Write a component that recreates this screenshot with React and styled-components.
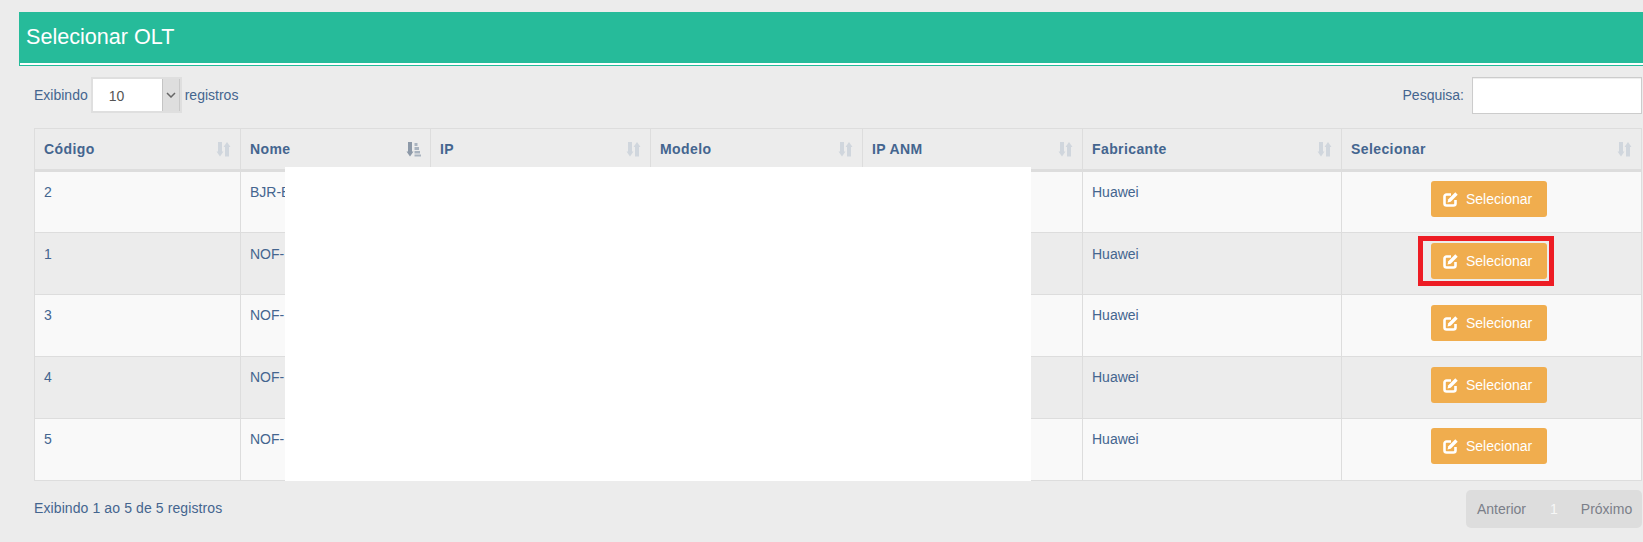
import React from "react";
import styled, { createGlobalStyle } from "styled-components";

const Global = createGlobalStyle`
  html, body { margin: 0; padding: 0; background: #ececec; overflow: hidden; }
  body { font-family: "Liberation Sans", Arial, sans-serif; font-size: 14px; color: #44658f; }
`;

const Page = styled.div`
  position: relative;
  width: 1643px;
  height: 542px;
  padding-top: 12px;
  box-sizing: border-box;
`;

const TitleBar = styled.header`
  margin-left: 19px;
  height: 54px;
  box-sizing: border-box;
  background: #26bb9a;
  border-left: 1px solid #26bb9a;
  border-bottom: 1px solid #26bb9a;
  position: relative;
  padding: 12px 0 0 6px;
  &::after {
    content: "";
    display: block;
    position: absolute;
    left: 0; right: 0; bottom: 0;
    height: 2px;
    background: #fff;
  }
`;

const Title = styled.h1`
  margin: 0;
  font-size: 21.6px;
  font-weight: 400;
  line-height: 25px;
  color: #fff;
`;

const Content = styled.main`
  padding: 11px 1px 0 34px;
`;

const Controls = styled.div`
  display: flex;
  justify-content: space-between;
  align-items: flex-start;
  height: 51px;
`;

const Label = styled.label`
  display: flex;
  align-items: flex-start;
  gap: ${p => p.$gap}px;
  height: 37px;
  line-height: 36px;
`;

const SelectBox = styled.div`
  display: flex;
  width: 91px;
  height: 36px;
  box-sizing: border-box;
  border: 2px solid #dfdfdf;
  background: #fff;
`;

const SelectValue = styled.span`
  flex: 1;
  padding-left: 16px;
  line-height: 34px;
  font-size: 14px;
  color: #555;
`;

const SelectArrow = styled.span`
  display: flex;
  align-items: center;
  justify-content: center;
  width: 16px;
  background: #dedede;
  border-left: 1px solid #c4c4c4;
  border-right: 1px solid #c9c9c9;
`;

const SearchInput = styled.div`
  width: 170px;
  height: 37px;
  box-sizing: border-box;
  border: 1px solid #ccc;
  background: #fff;
  box-shadow: inset 0 1px 1px rgba(0,0,0,.075);
`;

const Table = styled.table`
  width: 1608px;
  table-layout: fixed;
  border-collapse: separate;
  border-spacing: 0;
  border-top: 1px solid #ddd;
  border-left: 1px solid #ddd;
`;

const Th = styled.th`
  position: relative;
  height: 43px;
  padding: 0 10px 0 9px;
  box-sizing: border-box;
  background: #ececec;
  border-right: 1px solid #ddd;
  border-bottom: 3px solid #ddd;
  text-align: left;
  font-size: 14px;
  font-weight: 700;
  letter-spacing: 0.4px;
  color: #44658f;
`;

const SortSlot = styled.span`
  position: absolute;
  right: 9px;
  top: 13px;
  display: block;
  line-height: 0;
`;

const Row = styled.tr`
  height: ${p => p.$h}px;
  background: ${p => (p.$odd ? "#f9f9f9" : "#ececec")};
`;

const Td = styled.td`
  padding: ${p => p.$top}px 10px 0 9px;
  box-sizing: border-box;
  border-right: 1px solid #ddd;
  border-bottom: 1px solid #ddd;
  vertical-align: top;
  line-height: 17px;
  overflow: hidden;
  white-space: nowrap;
`;

const ActionTd = styled(Td)`
  padding: ${p => p.$top}px 15px 0 10px;
`;

const Button = styled.button`
  display: flex;
  align-items: center;
  justify-content: flex-start;
  gap: 8px;
  width: 116px;
  height: 36px;
  margin: 0 auto;
  padding: 0 0 0 12px;
  border: 0;
  border-radius: 3px;
  background: #f0ad4e;
  color: #fff;
  font-family: inherit;
  font-size: 14px;
`;

const Footer = styled.div`
  display: flex;
  justify-content: space-between;
  align-items: flex-start;
  margin-top: 9px;
`;

const Info = styled.div`
  padding-top: 10px;
  line-height: 17px;
  letter-spacing: 0.1px;
`;

const Pager = styled.nav`
  display: flex;
  align-items: center;
  height: 38px;
  width: 176px;
  box-sizing: border-box;
  padding: 0 0 0 11px;
  background: #ddd;
  border-radius: 5px;
  font-size: 14px;
  color: #7b7f89;
`;

const PageNumber = styled.span`
  color: #f7f7f7;
  margin: 0 23px 0 24px;
`;

const Redaction = styled.div`
  position: absolute;
  left: 285px;
  top: 167px;
  width: 746px;
  height: 314px;
  background: #fff;
`;

const Highlight = styled.div`
  position: absolute;
  left: 1418px;
  top: 236px;
  width: 136px;
  height: 50px;
  box-sizing: border-box;
  border: 5px solid #ed1c24;
`;

const SortIcon = () => (
  <svg width="15" height="15" viewBox="0 0 15 15" fill="#d0d6dd">
    <path d="M2 0h4v9.500h1.500L4 14.500 .5 9.500H2z" />
    <path d="M9 14.500h4V5h1.500L11 0 7.500 5H9z" />
  </svg>
);

const SortActiveIcon = () => (
  <svg width="15" height="15" viewBox="0 0 15 15">
    <path d="M2 0h4v9.500h1.500L4 14.500 .5 9.500H2z" fill="#8d99a8" />
    <path d="M8.500 1h3v3h-3zM8.500 5h4.500v3H8.500zM8.500 9H14v2.500H8.500zM8.500 12.500H15v2H8.500z" fill="#a9b3bf" />
  </svg>
);

const EditIcon = () => (
  <svg width="15" height="15" viewBox="0 0 15 15" fill="none">
    <path d="M8 2.500H3.500A2 2 0 0 0 1.500 4.500V11.500A2 2 0 0 0 3.500 13.500H10.500A2 2 0 0 0 12.500 11.500V8" stroke="#fff" strokeWidth="2.600" />
    <path d="M12.300 .3l2.400 2.400-7 7-3.200.8.800-3.200z" fill="#fff" />
  </svg>
);

const Chevron = () => (
  <svg width="10" height="6" viewBox="0 0 10 6" fill="none" stroke="#666" strokeWidth="1.500">
    <path d="M1 1l4 4 4-4" />
  </svg>
);

const columns = [
  { name: "Código", width: 206 },
  { name: "Nome", width: 190, active: true },
  { name: "IP", width: 220 },
  { name: "Modelo", width: 212 },
  { name: "IP ANM", width: 220 },
  { name: "Fabricante", width: 259 },
  { name: "Selecionar", width: 300 },
];

const rows = [
  { id: 2, name: "BJR-B", h: 61, text: 12, btn: 9 },
  { id: 1, name: "NOF-", h: 62, text: 13, btn: 10 },
  { id: 3, name: "NOF-", h: 62, text: 12, btn: 10 },
  { id: 4, name: "NOF-", h: 62, text: 12, btn: 10 },
  { id: 5, name: "NOF-", h: 62, text: 12, btn: 9 },
];

export default function App() {
  return (
    <Page>
      <Global />
      <TitleBar>
        <Title>Selecionar OLT</Title>
      </TitleBar>
      <Content>
        <Controls>
          <Label $gap={3}>
            Exibindo
            <SelectBox>
              <SelectValue>10</SelectValue>
              <SelectArrow><Chevron /></SelectArrow>
            </SelectBox>
            registros
          </Label>
          <Label $gap={8}>
            Pesquisa:
            <SearchInput />
          </Label>
        </Controls>
        <Table>
          <colgroup>
            {columns.map(c => <col key={c.name} style={{ width: c.width }} />)}
          </colgroup>
          <thead>
            <tr>
              {columns.map(c => (
                <Th key={c.name}>
                  {c.name}
                  <SortSlot>{c.active ? <SortActiveIcon /> : <SortIcon />}</SortSlot>
                </Th>
              ))}
            </tr>
          </thead>
          <tbody>
            {rows.map((r, i) => (
              <Row key={r.id} $h={r.h} $odd={i % 2 === 0}>
                <Td $top={r.text}>{r.id}</Td>
                <Td $top={r.text}>{r.name}</Td>
                <Td $top={r.text} />
                <Td $top={r.text} />
                <Td $top={r.text} />
                <Td $top={r.text}>Huawei</Td>
                <ActionTd $top={r.btn}>
                  <Button><EditIcon />Selecionar</Button>
                </ActionTd>
              </Row>
            ))}
          </tbody>
        </Table>
        <Footer>
          <Info>Exibindo 1 ao 5 de 5 registros</Info>
          <Pager>
            Anterior
            <PageNumber>1</PageNumber>
            Próximo
          </Pager>
        </Footer>
      </Content>
      <Redaction />
      <Highlight />
    </Page>
  );
}
